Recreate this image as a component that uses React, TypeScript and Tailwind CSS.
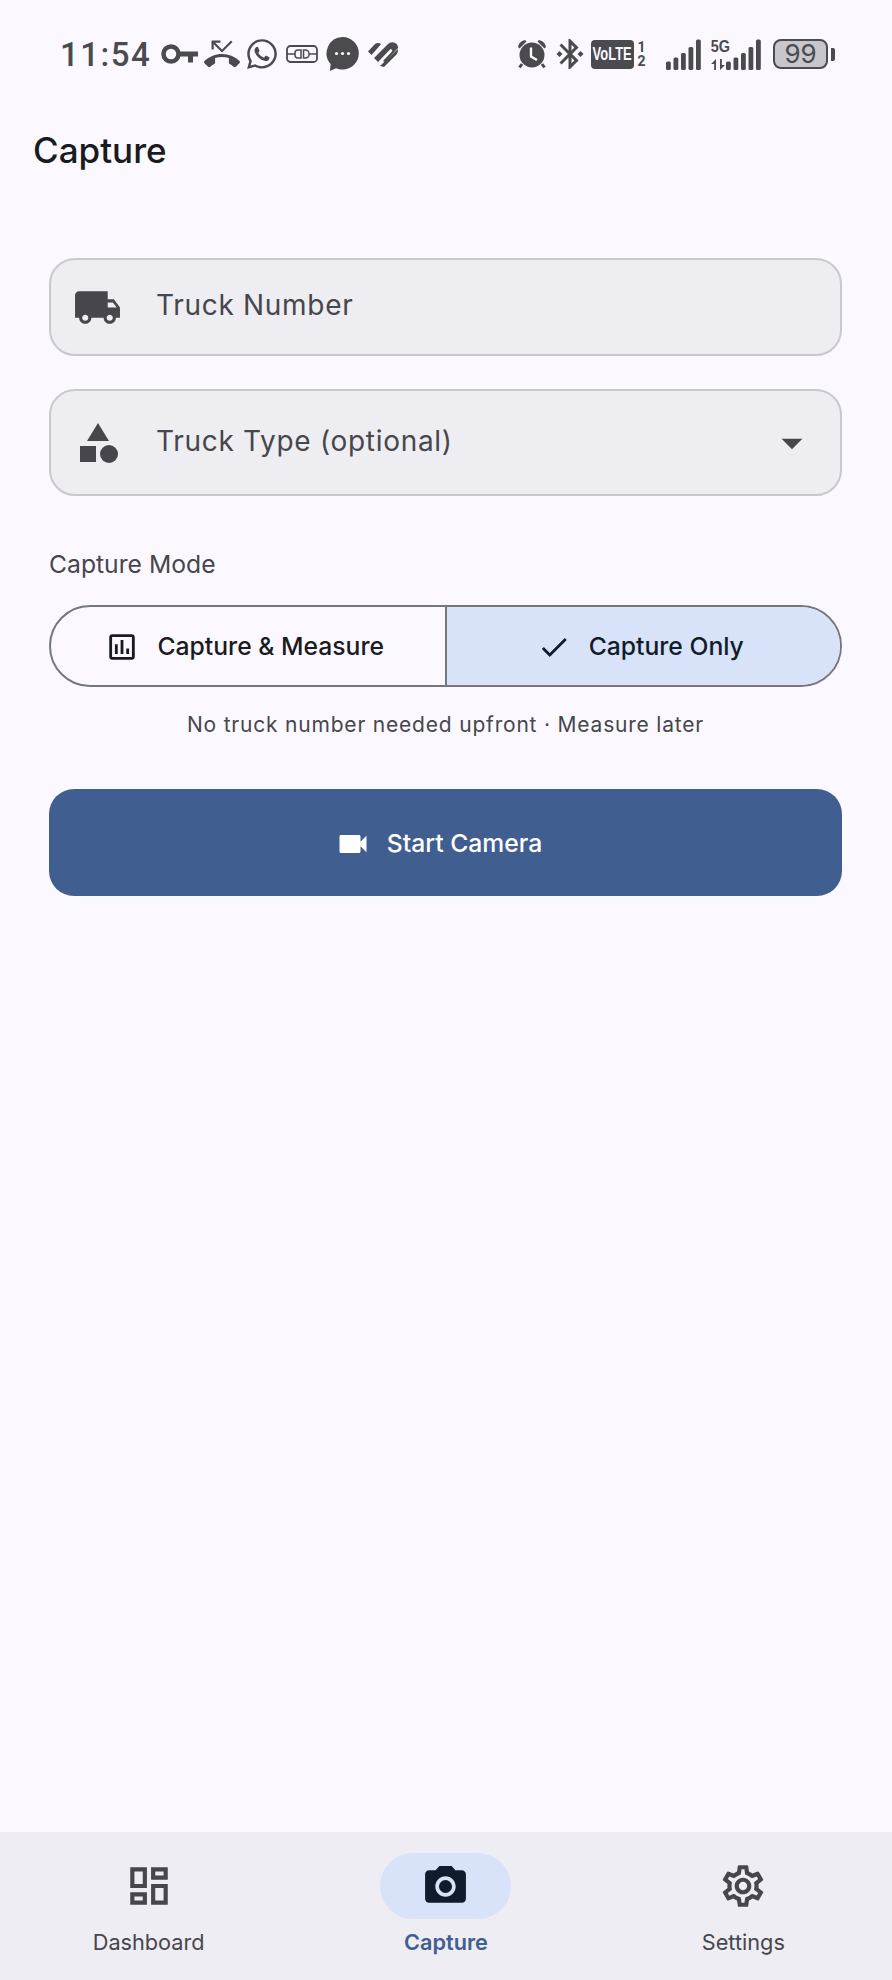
import { FaWhatsapp } from "react-icons/fa";
import {
  MdArrowDropDown,
  MdBluetoothConnected,
  MdCameraAlt,
  MdCategory,
  MdCheck,
  MdLocalShipping,
  MdOutlineAssessment,
  MdOutlineDashboard,
  MdOutlineSettings,
  MdPhoneMissed,
  MdVideocam,
} from "react-icons/md";

const KeyIcon = () => (
  <svg width="37" height="20" viewBox="0 0 37 20" fill="none" className="ml-[13px]">
    <circle cx="10" cy="10" r="7.5" stroke="#4a4a4f" strokeWidth="4.5" />
    <path d="M17 7.5h20v5h-5v6h-5v-6H17z" fill="#4a4a4f" />
  </svg>
);

const ConnectorIcon = () => (
  <svg width="32" height="18" viewBox="0 0 32 18" fill="none" stroke="#4a4a4f" className="ml-[7px]">
    <rect x="1" y="1" width="30" height="16" rx="3.5" strokeWidth="1.8" />
    <path d="M1 9h8M23 9h8M15 5h-3a3 3 0 0 0-3 3v2a3 3 0 0 0 3 3h3zM17.500 5h2a3.500 3.500 0 0 1 3.500 3.500v1a3.500 3.500 0 0 1-3.500 3.500h-2z" strokeWidth="1.5" />
  </svg>
);

const ChatIcon = () => (
  <svg width="33" height="34" viewBox="0 0 33 34" className="ml-[8px]">
    <path d="M16.500 0a16.300 16.300 0 0 1 0 32.600c-2.500 0-4.500-.4-6.500-1.300L4 34l.6-7A16.300 16.300 0 0 1 16.500 0z" fill="#4a4a4f" />
    <circle cx="10.500" cy="16.500" r="1.600" fill="#fbf9ff" />
    <circle cx="16.500" cy="16.500" r="1.600" fill="#fbf9ff" />
    <circle cx="22.500" cy="16.500" r="1.600" fill="#fbf9ff" />
  </svg>
);

const HeartIcon = () => (
  <svg width="30" height="25" viewBox="0 0 30 25" className="ml-[9px]">
    <path d="M0 9.500 7 2c2-1.600 4-1.400 6 .2L3.500 13z" fill="#4a4a4f" />
    <path d="M6 16 19.500 2.500c3-3 7-2.800 9.500 0 .8 1 1 2 1 3.500L17 20l-2-1 9-9.500c1-1.400-.8-3-2.200-1.800L10 20z" fill="#4a4a4f" />
    <path d="M12 24 30 7c0 3-.5 4.500-2 6L16 25z" fill="#4a4a4f" />
  </svg>
);

const AlarmIcon = () => (
  <svg width="30" height="30" viewBox="0 0 30 30">
    <circle cx="15" cy="16" r="12.500" fill="#4a4a4f" />
    <path d="M1 8c1-4 3-6 7-7l1.500 1.500L2.500 9.500zM29 8c-1-4-3-6-7-7l-1.500 1.500 7 7z" fill="#4a4a4f" />
    <path d="M5 25l-2.500 3.500M25 25l2.500 3.500" stroke="#4a4a4f" strokeWidth="3" />
    <path d="M14 8.500v9l6 3.500" stroke="#fbf9ff" strokeWidth="2.400" fill="none" />
  </svg>
);

const SignalBars = () => (
  <svg width="35" height="31" viewBox="0 0 35 31" fill="#4a4a4f">
    <rect x="0" y="22.500" width="4.800" height="8.500" rx="1.500" />
    <rect x="7.500" y="18.500" width="4.800" height="12.500" rx="1.500" />
    <rect x="15" y="14" width="4.800" height="17" rx="1.500" />
    <rect x="22.500" y="8" width="4.800" height="23" rx="1.500" />
    <rect x="30" y="0.500" width="4.800" height="30.500" rx="1.500" />
  </svg>
);

function StatusBar() {
  return (
    <div className="flex h-[108px] items-center justify-between pl-[60px] pr-[57px] text-[#4a4a4f]">
      <div className="flex items-center">
        <span className="w-[88px] font-['Roboto',sans-serif] text-[33px] leading-none font-medium tracking-[1.5px]">11:54</span>
        <KeyIcon />
        <MdPhoneMissed className="ml-[6px] size-[36px]" />
        <FaWhatsapp className="ml-[5px] size-[34px]" />
        <ConnectorIcon />
        <ChatIcon />
        <HeartIcon />
      </div>
      <div className="flex items-center">
        <AlarmIcon />
        <MdBluetoothConnected className="ml-[5px] size-[36px]" />
        <span className="ml-[3px] flex h-[29px] w-[43px] items-center justify-center overflow-hidden rounded-[4px] bg-[#4a4a4f] font-['Liberation_Sans',sans-serif] text-[18px] font-bold text-[#fbf9ff]">
          <span className="scale-x-[0.72]">VoLTE</span>
        </span>
        <span className="ml-[3px] flex w-[9px] flex-col items-center font-['Roboto',sans-serif] text-[14px] leading-[14px] font-bold">
          <span>1</span>
          <span>2</span>
        </span>
        <span className="ml-5">
          <SignalBars />
        </span>
        <span className="relative ml-[25px] h-[31px] w-[35px]">
          <SignalBars />
          <span className="absolute top-[1px] -left-[17px] bg-[#fbf9ff] pr-[1px] font-['Liberation_Sans',sans-serif] text-[17px] leading-[14px] font-bold">
            <span className="block scale-x-[0.85]">5G</span>
          </span>
          <svg width="14" height="11" viewBox="0 0 14 11" fill="#4a4a4f" className="absolute top-[20px] -left-[15px]">
            <path d="M0 5 5 0v11H3.200V5zM14 6l-5 5V0h1.800v6z" />
          </svg>
        </span>
        <span className="ml-3 flex h-[30px] w-[55px] items-center justify-center rounded-[8px] border-[2.5px] border-[#4a4a4f] bg-[#c6c6cc] font-['Inter',sans-serif] text-[26px] leading-none">
          99
        </span>
        <span className="ml-[3px] h-[13px] w-[4px] rounded-r-[2px] bg-[#4a4a4f]" />
      </div>
    </div>
  );
}

function Field({ icon, label, height, trailing }: { icon: React.ReactNode; label: string; height: string; trailing?: boolean }) {
  return (
    <div className={`flex items-center rounded-[26px] border-2 border-[#c8c8ce] bg-[#eeedf2] ${height}`}>
      <span className="flex w-[105px] shrink-0 items-center justify-center pr-[12px] text-[#46464c]">{icon}</span>
      <span className="flex-1 pb-[4px] text-[28px] leading-none tracking-[0.7px] text-[#46464c]">{label}</span>
      {trailing && <MdArrowDropDown className="mr-[23px] size-[50px] text-[#46464c]" />}
    </div>
  );
}

function NavItem({ icon, label, active }: { icon: React.ReactNode; label: string; active?: boolean }) {
  return (
    <div className="flex flex-col items-center">
      <span className={`flex h-[66px] w-[131px] items-center justify-center rounded-full ${active ? "bg-[#d8e2f8] text-[#101c2b]" : "text-[#46464c]"}`}>
        {icon}
      </span>
      <span className={`mt-[7px] text-[21.700px] leading-[32px] ${active ? "font-semibold text-[#415e91]" : "text-[#46464c]"}`}>{label}</span>
    </div>
  );
}

export default function App() {
  return (
    <div className="flex min-h-[1980px] flex-col bg-[#fbf9ff] font-['Inter',sans-serif]">
      <StatusBar />

      <h1 className="mt-[20px] h-[44px] pl-[33px] text-[35px] leading-[44px] font-medium text-[#1a1b20]">Capture</h1>

      <main className="flex flex-1 flex-col pt-[86px] pr-[50px] pl-[49px]">
        <Field icon={<MdLocalShipping className="size-[49px]" />} label="Truck Number" height="h-[98px]" />
        <div className="mt-[33px]">
          <Field icon={<MdCategory className="size-[48px]" />} label="Truck Type (optional)" height="h-[107px]" trailing />
        </div>

        <p className="mt-[53px] text-[24.700px] leading-[30px] text-[#46464c]">Capture Mode</p>

        <div className="mt-[26px] flex h-[82px] overflow-hidden rounded-full border-2 border-[#74777f]">
          <div className="flex flex-1 items-center justify-center gap-[18px] border-r-2 border-[#74777f] pt-[2px] pr-[6px] text-[#1a1b20]">
            <MdOutlineAssessment className="size-[34px]" />
            <span className="text-[24.700px] font-medium">Capture &amp; Measure</span>
          </div>
          <div className="flex flex-1 items-center justify-center gap-[18px] bg-[#d8e2f8] pt-[2px] pr-[6px] text-[#101c2b]">
            <MdCheck className="size-[34px]" />
            <span className="text-[24.700px] font-medium">Capture Only</span>
          </div>
        </div>

        <p className="mt-[23px] text-center text-[21px] leading-[30px] tracking-[0.8px] text-[#46464c]">
          No truck number needed upfront · Measure later
        </p>

        <button className="mt-[49px] flex h-[107px] items-center justify-center gap-[16px] rounded-[25px] bg-[#415e91] pt-[2px] pr-[14px] text-white">
          <MdVideocam className="size-[36px]" />
          <span className="text-[24.700px] font-medium">Start Camera</span>
        </button>
      </main>

      <nav className="grid h-[148px] grid-cols-3 bg-[#eeedf3] pt-[21px]">
        <NavItem icon={<MdOutlineDashboard className="size-[50px]" />} label="Dashboard" />
        <NavItem icon={<MdCameraAlt className="size-[49px]" />} label="Capture" active />
        <NavItem icon={<MdOutlineSettings className="size-[50px]" />} label="Settings" />
      </nav>
    </div>
  );
}
